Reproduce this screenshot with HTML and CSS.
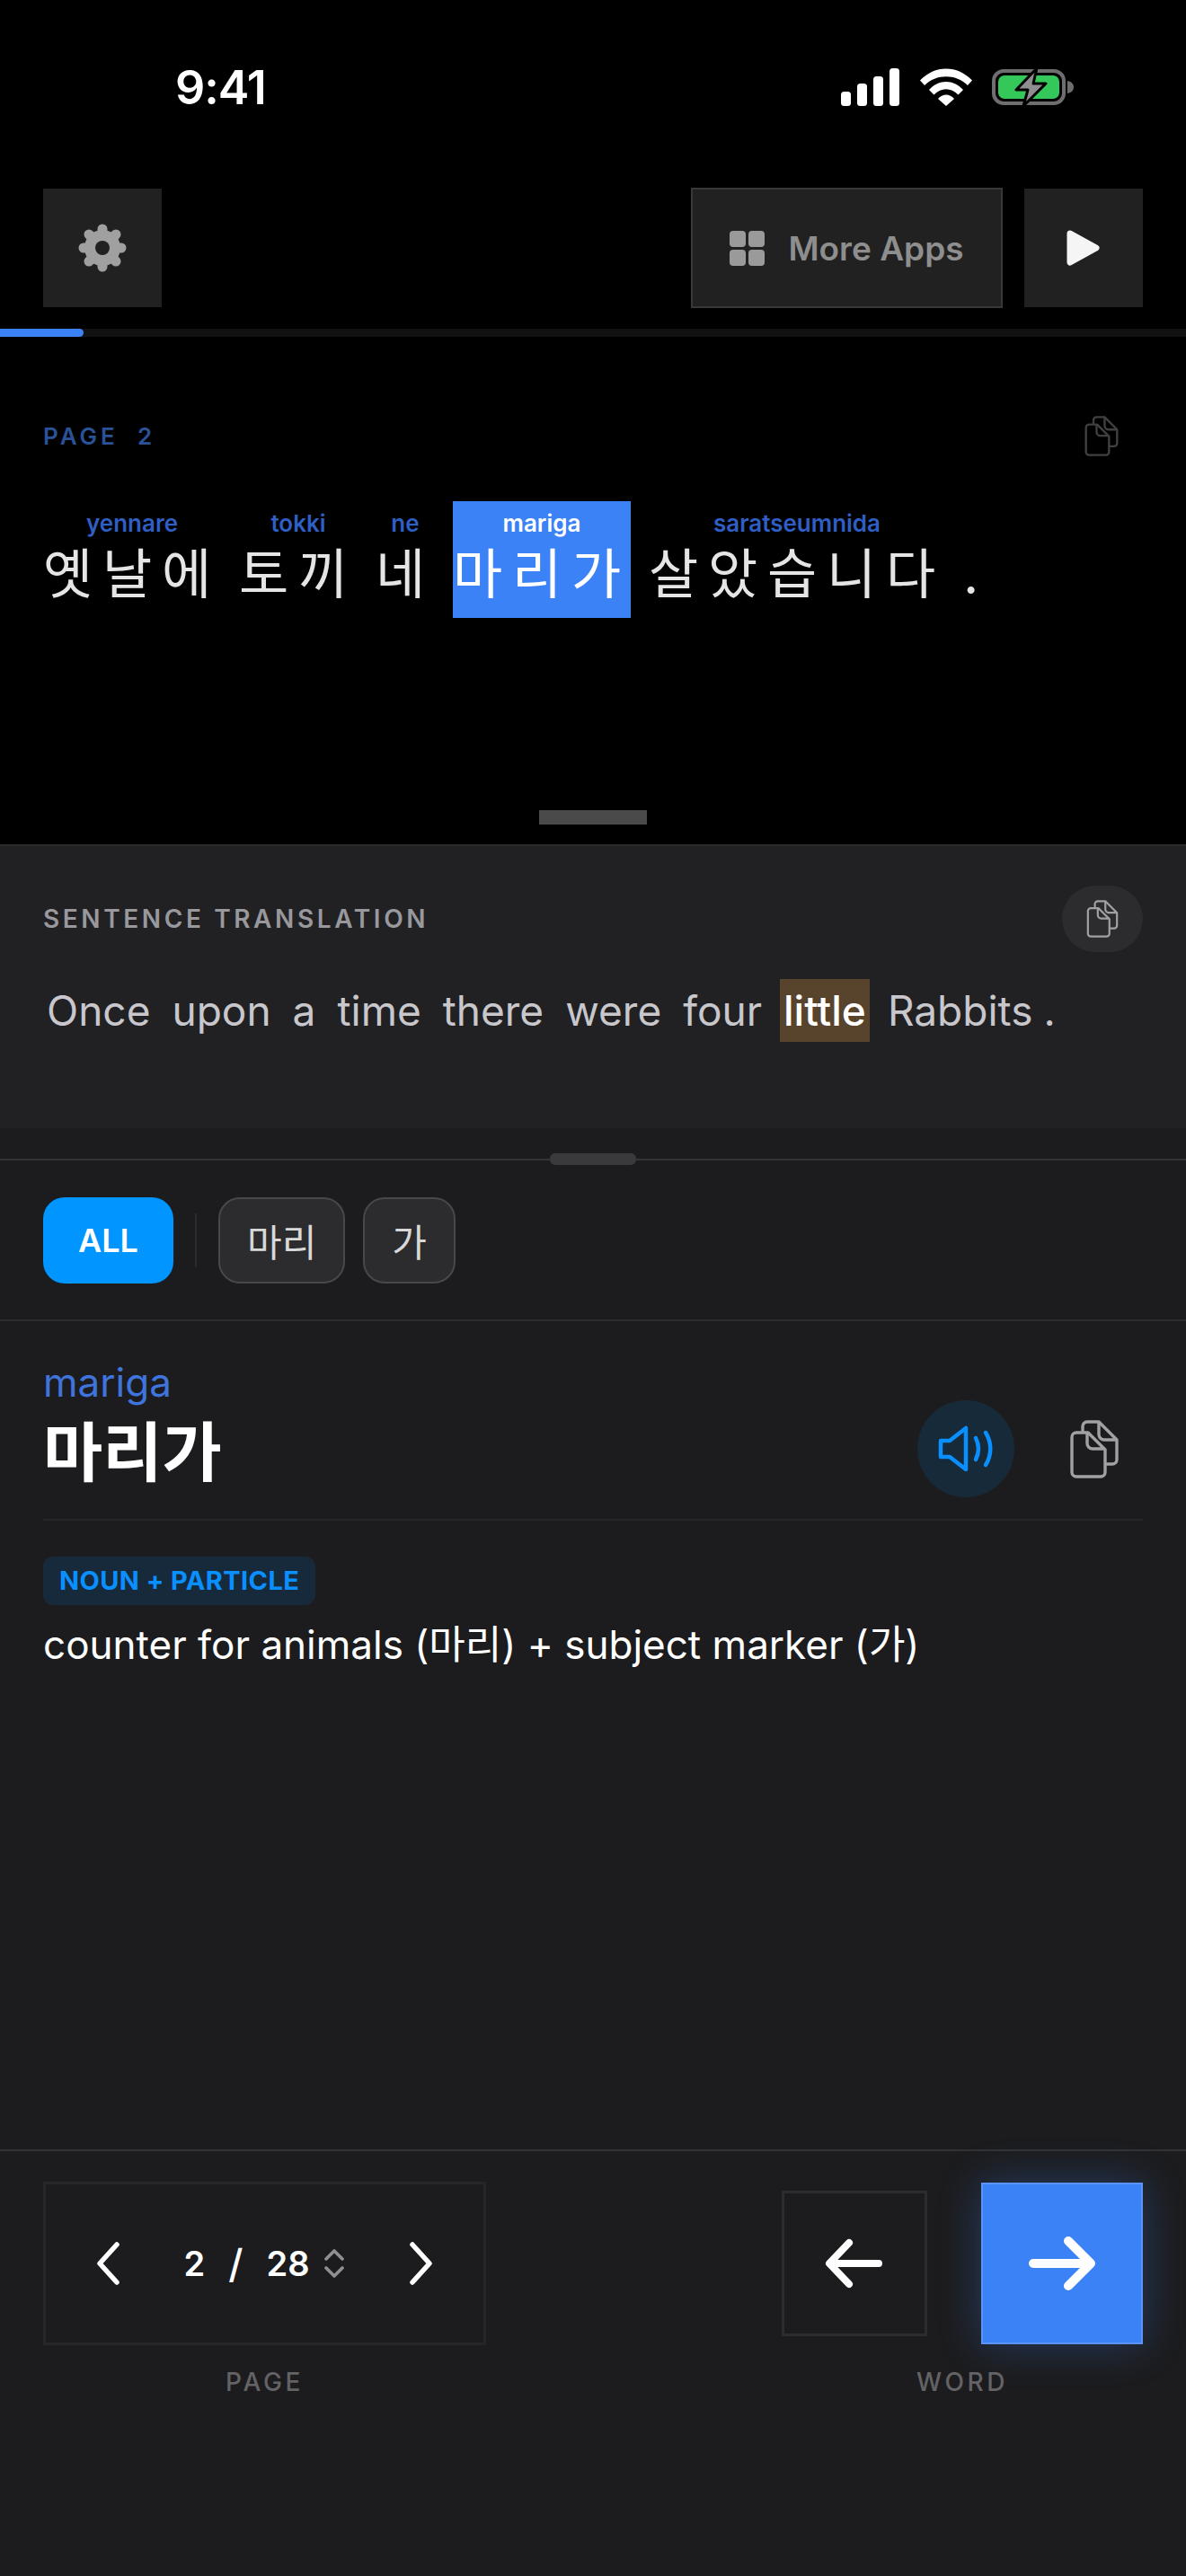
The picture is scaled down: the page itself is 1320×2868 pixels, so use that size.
FILE: index.html
```html
<!DOCTYPE html>
<html lang="ko">
<head>
<meta charset="utf-8">
<title>Reader</title>
<link rel="stylesheet" href="styles.css">
</head>
<body>
<svg class="defs" width="0" height="0" aria-hidden="true">
  <symbol id="copy" viewBox="0 0 54 65">
    <g fill="none" stroke="currentColor" stroke-width="3.4" stroke-linejoin="round" stroke-linecap="round">
      <path d="M14 12V7a5 5 0 0 1 5-5h13l20 20v22a5 5 0 0 1-5 5h-6"/>
      <path d="M32 3v13a6 6 0 0 0 6 6h13"/>
      <path d="M7 14h13l19 19v25a5 5 0 0 1-5 5H7a5 5 0 0 1-5-5V19a5 5 0 0 1 5-5z"/>
      <path d="M19 15v11a6 6 0 0 0 6 6h13"/>
    </g>
  </symbol>
</svg>
<div class="app">
  <section class="top">
    <div class="status">
      <span class="time">9:41</span>
      <div class="status-icons">
        <svg class="sig" width="66" height="42" viewBox="0 0 66 42"><rect x="0" y="26" width="11" height="16" rx="3.5"/><rect x="18" y="17" width="11" height="25" rx="3.5"/><rect x="36" y="9" width="11" height="33" rx="3.5"/><rect x="54" y="0" width="11" height="42" rx="3.5"/></svg>
        <svg class="wifi" width="58" height="42" viewBox="0 0 58 42"><path d="M0 13.500C16-4 42-4 58 13.500L53 19C40 6 18 6 5 19Z"/><path d="M10 24C21 12 37 12 48 24L42.500 29.500C34 21 24 21 15.500 29.500Z"/><path d="M20 34C25 28 33 28 38 34L29 42Z"/></svg>
        <svg class="batt" width="94" height="44" viewBox="0 0 94 44"><rect x="2" y="4" width="78" height="36" rx="11" fill="none" stroke="#6e6e70" stroke-width="4"/><rect x="7" y="9" width="68" height="26" rx="7" fill="#34c759"/><path d="M84 15c5 1 7 4 7 7s-2 6-7 7z" fill="#6e6e70"/><path d="M50 1L27 25h13l-5 18 25-25H46z" fill="#8e8e90" stroke="#000" stroke-width="3" stroke-linejoin="round"/></svg>
      </div>
    </div>
    <div class="toolbar">
      <button class="tool square">
        <svg width="54" height="54" viewBox="0 0 54 54"><g stroke="#a0a0a0" stroke-width="11" stroke-linecap="round"><path d="M27 6v42M6 27h42M12 12l30 30M42 12L12 42"/></g><circle cx="27" cy="27" r="20" fill="#a0a0a0"/><circle cx="27" cy="27" r="8" fill="#212121"/></svg>
      </button>
      <div class="tool-right">
        <button class="tool apps">
          <span class="grid"><i></i><i></i><i></i><i></i></span>
          <span class="apps-label">More Apps</span>
        </button>
        <button class="tool square">
          <svg width="38" height="42" viewBox="0 0 38 42"><path d="M4 5L33 21 4 37z" fill="#f5f5f5" stroke="#f5f5f5" stroke-width="7" stroke-linejoin="round"/></svg>
        </button>
      </div>
    </div>
    <div class="progress"><div class="progress-fill"></div></div>
    <div class="reader">
      <div class="reader-head">
        <span class="page-tag">PAGE  2</span>
        <svg class="copy-dim"><use href="#copy"/></svg>
      </div>
      <div class="words">
        <div class="word"><span class="rom">yennare</span><span class="han">옛날에</span></div>
        <div class="word"><span class="rom">tokki</span><span class="han">토끼</span></div>
        <div class="word"><span class="rom">ne</span><span class="han">네</span></div>
        <div class="word active"><span class="rom">mariga</span><span class="han">마리가</span></div>
        <div class="word"><span class="rom">saratseumnida</span><span class="han">살았습니다</span></div>
        <div class="word"><span class="rom">&nbsp;</span><span class="han">.</span></div>
      </div>
    </div>
    <div class="drag"></div>
  </section>

  <section class="panel">
    <div class="panel-head">
      <span class="panel-label">SENTENCE TRANSLATION</span>
      <button class="pill"><svg class="copy-mid"><use href="#copy"/></svg></button>
    </div>
    <div class="sentence">
      <span class="tok">Once</span><span class="tok">upon</span><span class="tok">a</span><span class="tok">time</span><span class="tok">there</span><span class="tok">were</span><span class="tok">four</span><span class="tok hl">little</span><span class="tok">Rabbits</span><span class="tok dot">.</span>
    </div>
  </section>

  <div class="divider"><span class="grip"></span></div>

  <div class="tabs">
    <button class="tab on">ALL</button>
    <span class="tab-sep"></span>
    <button class="tab">마리</button>
    <button class="tab">가</button>
  </div>

  <div class="entry">
    <div class="entry-head">
      <div class="entry-words">
        <div class="entry-rom">mariga</div>
        <div class="entry-han">마리가</div>
      </div>
      <div class="entry-actions">
        <button class="speak">
          <svg width="70" height="60" viewBox="0 0 70 60"><g fill="none" stroke="#0a8fff" stroke-width="4.500" stroke-linecap="round" stroke-linejoin="round"><path d="M7 21h10L35 7v46L17 39H7z"/><path d="M46 18c4 8 4 16 0 24"/><path d="M57 12c7 11 7 25 0 36"/></g></svg>
        </button>
        <svg class="copy-big"><use href="#copy"/></svg>
      </div>
    </div>
    <span class="badge">NOUN + PARTICLE</span>
    <p class="def">counter for animals (마리) + subject marker (가)</p>
  </div>

  <footer class="bottom">
    <div class="col page-col">
      <div class="pager">
        <svg width="30" height="50" viewBox="0 0 30 50"><path d="M25 4L6 25l19 21" fill="none" stroke="#fff" stroke-width="5.500" stroke-linecap="round" stroke-linejoin="round"/></svg>
        <div class="count">
          <span>2</span><span class="slash">/</span><span>28</span>
          <svg width="24" height="32" viewBox="0 0 24 32"><path d="M3 11l9-9 9 9M3 21l9 9 9-9" fill="none" stroke="#8e8e93" stroke-width="3.600" stroke-linecap="round" stroke-linejoin="round"/></svg>
        </div>
        <svg width="30" height="50" viewBox="0 0 30 50"><path d="M5 4l19 21L5 46" fill="none" stroke="#fff" stroke-width="5.500" stroke-linecap="round" stroke-linejoin="round"/></svg>
      </div>
      <span class="cap">PAGE</span>
    </div>
    <div class="col word-col">
      <div class="word-nav">
        <button class="nav back">
          <svg width="66" height="56" viewBox="0 0 66 56"><path d="M60 28H6M27 5L5 28l22 23" fill="none" stroke="#fff" stroke-width="8" stroke-linecap="round" stroke-linejoin="round"/></svg>
        </button>
        <button class="nav next">
          <svg width="76" height="62" viewBox="0 0 76 62"><path d="M6 31h62M45 6l25 25-25 25" fill="none" stroke="#fff" stroke-width="10" stroke-linecap="round" stroke-linejoin="round"/></svg>
        </button>
      </div>
      <span class="cap">WORD</span>
    </div>
  </footer>
</div>
</body>
</html>
```
FILE: styles.css
```css
* { box-sizing: border-box; }
html, body { margin: 0; padding: 0; background: #1c1c1e; }
body { font-family: "Inter", "Noto Sans CJK KR", sans-serif; color: #fff; }
button { font: inherit; color: inherit; padding: 0; border: 0; background: none; }
.defs { position: absolute; }
.app { width: 1320px; height: 2868px; display: flex; flex-direction: column; background: #1c1c1e; overflow: hidden; }

.top { height: 940px; background: #000; display: flex; flex-direction: column; flex: none; }
.status { height: 209px; flex: none; display: flex; justify-content: space-between; align-items: flex-start; padding: 68px 122px 0 195px; }
.time { font-size: 52px; line-height: 60px; font-weight: 600; letter-spacing: -1px; }
.status-icons { display: flex; align-items: center; gap: 22px; margin-top: 7px; }
.sig, .wifi { fill: #fff; }

.toolbar { height: 134px; flex: none; display: flex; justify-content: space-between; align-items: center; padding: 0 48px; }
.tool-right { display: flex; gap: 24px; align-items: center; }
.tool { background: #212121; display: flex; align-items: center; justify-content: center; }
.square { width: 132px; height: 132px; }
.apps { width: 347px; height: 134px; border: 2px solid #383838; gap: 26px; }
.grid { display: grid; grid-template-columns: 18px 18px; grid-auto-rows: 18px; gap: 3px; }
.grid i { background: #9a9a9a; border-radius: 4px; }
.apps-label { font-size: 37px; font-weight: 600; color: #8e8e8e; }

.progress { height: 9px; flex: none; margin-top: 23px; background: #111; }
.progress-fill { width: 93px; height: 100%; background: #3b82f6; border-radius: 0 5px 5px 0; }

.reader { padding: 0 48px; }
.reader-head { display: flex; justify-content: space-between; align-items: center; height: 46px; margin-top: 87px; padding-right: 27px; }
.page-tag { font-size: 26px; font-weight: 600; letter-spacing: 4px; color: #2a5298; white-space: pre; }
.copy-dim { width: 38px; height: 45px; color: #404042; }

.words { display: flex; gap: 20px; margin-top: 50px; }
.word { display: flex; flex-direction: column; align-items: center; height: 130px; padding-top: 7px; }
.rom { font-size: 26px; line-height: 36px; font-weight: 600; color: #2f5fc4; white-space: nowrap; }
.han { font-size: 60px; line-height: 76px; letter-spacing: 10.8px; color: #e5e5e5; white-space: nowrap; font-weight: 400; }
.active { background: #3b82f6; }
.active .rom, .active .han { color: #fff; }

.drag { width: 120px; height: 16px; background: #4a4a4a; margin: auto auto 22px; }

.panel { height: 316px; flex: none; background: #212124; border-top: 2px solid #2c2c2e; padding: 44px 48px 0; }
.panel-head { display: flex; justify-content: space-between; align-items: center; height: 74px; }
.panel-label { font-size: 28px; font-weight: 600; letter-spacing: 3.6px; color: #98989d; }
.pill { width: 90px; height: 74px; border-radius: 37px; background: #2c2c2e; display: flex; align-items: center; justify-content: center; }
.copy-mid { width: 38px; height: 42px; color: #a0a0a5; }
.sentence { display: flex; gap: 16px; margin-top: 30px; margin-left: 0; }
.tok { font-size: 46px; line-height: 70px; height: 70px; padding: 0 4px; color: #c7c7cc; }
.hl { background: #58432c; color: #fff; font-weight: 500; }
.dot { padding: 0; margin-left: -8px; }

.divider { position: relative; flex: none; height: 2px; margin-top: 34px; background: #333335; }
.grip { position: absolute; left: 612px; top: -6px; width: 96px; height: 13px; border-radius: 6px; background: #3a3a3c; }

.tabs { flex: none; display: flex; align-items: center; gap: 20px; height: 179px; padding: 0 48px 0; border-bottom: 2px solid #2c2c2e; }
.tab { height: 96px; padding: 0 30px; border-radius: 24px; background: #2c2c2e; border: 2px solid #48484a; font-size: 42px; color: #d8d8d8; }
.tab.on { width: 145px; padding: 0; background: #0095ff; border: 0; color: #fff; font-size: 36px; font-weight: 600; }
.tab-sep { width: 2px; height: 60px; background: #2c2c2e; margin: 0 4px; }

.entry { flex: none; padding: 0 48px; }
.entry-head { display: flex; justify-content: space-between; align-items: flex-end; height: 222px; border-bottom: 2px solid #262628; padding-bottom: 24px; }
.entry-rom { font-size: 44px; line-height: 56px; color: #3f74dd; }
.entry-han { font-size: 72px; line-height: 100px; font-weight: 700; }
.entry-actions { display: flex; align-items: center; gap: 62px; padding-right: 27px; }
.speak { width: 108px; height: 108px; border-radius: 50%; background: #172a3a; display: flex; align-items: center; justify-content: center; }
.copy-big { width: 54px; height: 65px; color: #a0a0a5; }
.badge { display: inline-block; height: 54px; line-height: 54px; padding: 0 18px; margin-top: 40px; border-radius: 11px; background: #172a3c; color: #0a8fff; font-size: 29px; font-weight: 700; letter-spacing: 0.4px; }
.def { margin: 14px 0 0; font-size: 44px; line-height: 60px; color: #fff; }

.bottom { margin-top: auto; height: 475px; flex: none; border-top: 2px solid #333335; padding: 34px 48px 0; display: flex; justify-content: space-between; align-items: flex-start; }
.col { display: flex; flex-direction: column; align-items: center; }
.pager { width: 493px; height: 182px; border: 3px solid #262628; display: flex; align-items: center; justify-content: space-between; padding: 0 54px; }
.count { display: flex; align-items: center; font-size: 38px; font-weight: 600; gap: 0; }
.slash { margin: 0 26px; font-weight: 500; font-size: 44px; }
.count svg { margin-left: 16px; }
.word-nav { display: flex; align-items: center; gap: 60px; height: 182px; }
.nav { display: flex; align-items: center; justify-content: center; }
.back { width: 162px; height: 162px; border: 3px solid #2c2c2e; }
.next { width: 180px; height: 180px; background: #3b82f6; border: 2px solid #5b93f7; box-shadow: 0 0 44px rgba(59,130,246,.32); }
.cap { margin-top: 24px; font-size: 28px; line-height: 34px; font-weight: 500; letter-spacing: 3.6px; color: #636366; }
```
